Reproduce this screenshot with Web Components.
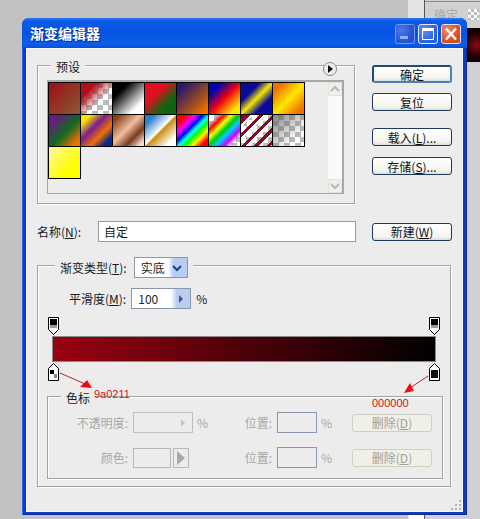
<!DOCTYPE html>
<html>
<head>
<meta charset="utf-8">
<style>
html, body { margin: 0; height: 100%; }
body {
  width: 480px;
  height: 519px;
  overflow: hidden;
  position: relative;
  background: #c2c2c2;
  font: 12px "Noto Sans CJK SC", "Liberation Sans", sans-serif;
  color: #1a1a1a;
}
</style>
</head>
<body>
<desktop-back></desktop-back>
<xp-window title="渐变编辑器">
  <gradient-editor></gradient-editor>
</xp-window>

<script>
const CJK = '"Noto Sans CJK SC", "Liberation Sans", sans-serif';
const CHECK = 'repeating-conic-gradient(#bbb 0 25%, #fff 0 50%) 0 0/11px 11px';

// whatever is showing behind the dialog
class DesktopBack extends HTMLElement {
  constructor() {
    super();
    this.attachShadow({mode: 'open'}).innerHTML = `
<style>
:host { position: absolute; inset: 0; display: block; }
.side { position: absolute; left: 408px; top: 0; width: 16px; height: 519px; background: #e4e4e4; }
.panel { position: absolute; left: 424px; top: 0; width: 56px; height: 519px; background: #d0d0d0; border-left: 1px solid #555; box-sizing: border-box; }
.panel .line { height: 1px; margin-top: 1px; background: #8a8a8a; }
.ok { position: absolute; left: 9px; top: 6px; color: #aaa; font: 12px ${CJK}; }
.chk { position: absolute; left: 43px; top: 9px; width: 11px; height: 11px; background: ${CHECK}; background-size: 6px 6px; }
.dark { position: absolute; left: 42px; top: 28px; width: 14px; height: 34px; background: radial-gradient(circle at 70% 50%, #8a0a14, #200 60%, #050000); }
.foot { position: absolute; left: 409px; top: 515px; width: 15px; height: 4px; background: #fff; }
</style>
<div class="side"></div>
<div class="panel"><div class="line"></div><span class="ok">确定</span><div class="chk"></div><div class="dark"></div></div>
<div class="foot"></div>`;
  }
}
customElements.define('desktop-back', DesktopBack);

class XpWindow extends HTMLElement {
  constructor() {
    super();
    this.attachShadow({mode: 'open'}).innerHTML = `
<style>
:host {
  position: absolute;
  left: 22px;
  top: 18px;
  width: 445px;
  height: 497px;
  display: flex;
  flex-direction: column;
  box-sizing: border-box;
  border-radius: 7px 7px 0 0;
  background: #0a3cc4;
  padding: 0 4px 3px;
  box-shadow: inset 1px 0 #2a6af0, inset -1px 0 #0a2c9c, inset 0 -1px #0a2c9c;
}
.bar {
  height: 30px;
  flex: none;
  margin: 0 -4px;
  padding: 0 6px 0 8px;
  display: flex;
  align-items: center;
  justify-content: space-between;
  border-radius: 7px 7px 0 0;
  background: linear-gradient(#2f7cf2 0, #0c5ae6 10%, #0553e0 50%, #0a5fec 85%, #0a4fd4 100%);
}
.title {
  color: #fff;
  font: bold 14px ${CJK};
  text-shadow: 1px 1px 1px #0a2c80;
}
.btns { display: flex; gap: 3px; margin-top: 1px; }
.btn {
  width: 18px;
  height: 18px;
  border: 1px solid #dfe8ff;
  border-radius: 3px;
  background: radial-gradient(circle at 30% 30%, #5d8df0, #2a5fdc 70%);
}
.btn svg { display: block; }
.btn.min { background: radial-gradient(circle at 30% 30%, #4a7ae6, #2250d0 70%); border-color: #6f97ec; }
.btn.close { background: radial-gradient(circle at 30% 30%, #ec8a66, #d8481c 70%); }
.client { flex: 1; background: #ececec; min-height: 0; position: relative; box-shadow: inset 0 0 0 1px #f8f8f8; }
.grip { position: absolute; right: 1px; bottom: 1px; display: block; }
</style>
<div class="bar">
  <span class="title">${this.getAttribute('title')}</span>
  <div class="btns">
    <div class="btn min"><svg width="18" height="18"><rect x="4" y="11" width="8" height="3" fill="#8fb0f4"/></svg></div>
    <div class="btn"><svg width="18" height="18"><rect x="3.500" y="3.500" width="11" height="11" fill="none" stroke="#fff" stroke-width="1"/><rect x="3" y="3" width="12" height="3" fill="#fff"/></svg></div>
    <div class="btn close"><svg width="18" height="18"><path d="M4 3.500l10 11M14 3.500L4 14.500" stroke="#fff" stroke-width="2.400" fill="none"/></svg></div>
  </div>
</div>
<div class="client">
  <slot></slot>
  <svg class="grip" width="11" height="11" fill="#b4b4b4"><rect x="8" y="0" width="2" height="2"/><rect x="4" y="4" width="2" height="2"/><rect x="8" y="4" width="2" height="2"/><rect x="0" y="8" width="2" height="2"/><rect x="4" y="8" width="2" height="2"/><rect x="8" y="8" width="2" height="2"/></svg>
</div>`;
  }
}
customElements.define('xp-window', XpWindow);

class XpButton extends HTMLElement {
  constructor() {
    super();
    this.attachShadow({mode: 'open'}).innerHTML = `
<style>
:host {
  display: flex;
  align-items: center;
  justify-content: center;
  box-sizing: border-box;
  width: 80px;
  height: 18px;
  border: 1px solid #1c3a5c;
  border-radius: 3px;
  background: linear-gradient(#fff, #f4f4ee 80%, #dcdcd4);
  font: 12px ${CJK};
  color: #111;
}
:host([primary]) { border: 2px solid #3f6ea8; border-color: #24497c #4f7fb8 #4f7fb8 #24497c; }
:host([disabled]) { border-color: #cfcfc6; color: #a0a0a0; background: #f0f0e6; }
</style>
<slot></slot>`;
  }
}
customElements.define('xp-button', XpButton);

// box with a title sitting on its top edge; the title can hold controls too
class GroupBox extends HTMLElement {
  constructor() {
    super();
    this.attachShadow({mode: 'open'}).innerHTML = `
<style>
:host {
  display: block;
  position: relative;
  box-sizing: border-box;
  border: 1px solid #a3a3a3;
  box-shadow: 1px 1px #fff, inset 1px 1px #fff;
}
.legend {
  display: flex;
  width: max-content;
  align-items: center;
  height: var(--legend-h, 16px);
  margin-top: calc(var(--legend-h, 16px) / -2 + var(--legend-shift, 0px));
  margin-left: var(--legend-x, 13px);
  padding: 0 5px;
  background: #ececec;
}
</style>
<div class="legend"><slot name="legend"></slot></div>
<slot></slot>`;
  }
}
customElements.define('group-box', GroupBox);

class SwatchGrid extends HTMLElement {
  constructor() {
    super();
    const chk = CHECK;
    const list = [
      'linear-gradient(135deg,#a00c14,#8a5a38)',
      `linear-gradient(135deg,#b01018 0 25%,transparent 60%),${chk}`,
      'linear-gradient(135deg,#000 25%,#fff 78%)',
      'linear-gradient(135deg,#e01020 35%,#0f6410 70%)',
      'linear-gradient(135deg,#2a1a6c 15%,#9a4a20 60%,#f07000 90%)',
      'linear-gradient(135deg,#0000b0 20%,#f00010 50%,#ffe800 85%)',
      'linear-gradient(135deg,#0a0a98 30%,#f4e800 50%,#0a0a98 72%)',
      'linear-gradient(135deg,#f07000 15%,#ffe800 52%,#f07000 88%)',
      'linear-gradient(135deg,#6a1a80 15%,#0f6a20 55%,#f07000 88%)',
      'linear-gradient(135deg,#ffe000 15%,#7a1f90 40%,#f07000 65%,#0a2a88 85%)',
      'linear-gradient(135deg,#8a4010 10%,#f0c0a0 45%,#7a3a20 70%,#f0e0d0 92%)',
      'linear-gradient(135deg,#2a80c8 15%,#fff 48%,#c89010 52%,#fff 85%)',
      'linear-gradient(135deg,#ff0000 15%,#ff00ff 30%,#0000ff 42%,#00ffff 52%,#00ff00 62%,#ffff00 74%,#ff0000 88%)',
      `linear-gradient(135deg,transparent 14%,#f00 24%,#ff0 36%,#0c0 48%,#0cf 60%,#c0f 74%,transparent 86%),${chk}`,
      `repeating-linear-gradient(135deg,transparent 0 4px,#8a0a20 4px 7px,#fff 7px 9px),linear-gradient(135deg,#8a0a20 20%,transparent 20%),${chk}`,
      `linear-gradient(135deg,rgba(90,90,90,.75),transparent 75%),${chk}`,
      'linear-gradient(135deg,#fff8a0,#ffff00 70%)'
    ];
    const cells = list.map(g => `<i style="background:${g}"></i>`).join('');
    this.attachShadow({mode: 'open'}).innerHTML = `
<style>
:host {
  display: flex;
  box-sizing: border-box;
  height: 114px;
  margin: 6px 10px 0 9px;
  border-top: 2px solid #a8a8a8;
  border-left: 1px solid #a8a8a8;
  border-bottom: 1px solid #a8a8a8;
  border-right: 2px solid #a8a8a8;
}
.grid { flex: 1; display: grid; grid-template-columns: repeat(8, 32px); grid-auto-rows: 32px; align-content: start; }
i { display: block; box-sizing: border-box; border: 1px solid #000; margin: 0 -1px -1px 0; }
.scroll { width: 14px; display: flex; flex-direction: column; justify-content: space-between; background: #fafaf6; }
.arrow { height: 14px; background: #f0f0ea; border: 1px solid #e2e2da; box-sizing: border-box; }
.arrow svg { display: block; }
</style>
<div class="grid">${cells}</div>
<div class="scroll">
  <div class="arrow"><svg width="12" height="12"><path d="M2 8l4-4 4 4" fill="none" stroke="#b8b8b8" stroke-width="2"/></svg></div>
  <div class="arrow"><svg width="12" height="12"><path d="M2 4l4 4 4-4" fill="none" stroke="#b8b8b8" stroke-width="2"/></svg></div>
</div>`;
  }
}
customElements.define('swatch-grid', SwatchGrid);

// little box with a blue drop part on the right: select and the number fields
class ComboBox extends HTMLElement {
  constructor() {
    super();
    const down = this.getAttribute('arrow') === 'down';
    const glyph = down
      ? '<path d="M3 5l4 4 4-4" fill="none" stroke="#1c3c80" stroke-width="2"/>'
      : '<path d="M5 3l4 4-4 4z" fill="#44587c"/>';
    this.attachShadow({mode: 'open'}).innerHTML = `
<style>
:host {
  display: flex;
  box-sizing: border-box;
  height: 21px;
  border: 1px solid #8a96aa;
  background: #fff;
  font: 12px ${CJK};
  color: #222;
}
.val { flex: 1; padding-left: 6px; line-height: 19px; }
.drop { width: 19px; display: flex; align-items: center; justify-content: center; background: linear-gradient(90deg,#fff,#b8ccf4 30%); }
:host([disabled]) { border-color: #c0c0c0; background: #ececec; }
:host([disabled]) .drop { background: none; }
:host([disabled]) path { fill: #c4c4c4; }
</style>
<span class="val"><slot></slot></span>
<span class="drop"><svg width="14" height="14">${glyph}</svg></span>`;
  }
}
customElements.define('combo-box', ComboBox);

class GradientBar extends HTMLElement {
  constructor() {
    super();
    const top = x => `<svg class="stop" style="left:${x}px;top:0" width="12" height="18"><path d="M.5.5h10v12l-5 5l-5-5z" fill="#fff" stroke="#000"/><rect x="2" y="2" width="7" height="6" fill="#000"/><rect x="2" y="8" width="7" height="3" fill="#999"/></svg>`;
    const bottom = (x, inner) => `<svg class="stop" style="left:${x}px;top:46px" width="12" height="18"><path d="M.5 17.500h10v-12l-5-5l-5 5z" fill="#fff" stroke="#000"/>${inner}</svg>`;
    this.attachShadow({mode: 'open'}).innerHTML = `
<style>
:host { display: block; position: relative; height: 64px; margin-left: 5px; width: 384px; }
.bar {
  position: absolute;
  left: 0;
  top: 19px;
  width: 384px;
  height: 26px;
  box-sizing: border-box;
  border: 1px solid #8a8a8a;
  background: linear-gradient(90deg,#9a0211,#000);
}
.stop { position: absolute; display: block; }
</style>
<div class="bar"></div>
${top(-4)}${top(377)}
${bottom(-4, '<rect x="2" y="7" width="7" height="8" fill="#fff"/><rect x="2" y="7" width="4" height="4" fill="#000"/><rect x="6" y="11" width="3" height="4" fill="#888"/>')}
${bottom(377, '<rect x="2" y="7" width="7" height="8" fill="#111"/>')}`;
  }
}
customElements.define('gradient-bar', GradientBar);

// red notes somebody drew on top of the screenshot
class RedNotes extends HTMLElement {
  constructor() {
    super();
    this.attachShadow({mode: 'open'}).innerHTML = `
<style>
:host { position: absolute; left: 0; top: 0; width: 437px; height: 464px; pointer-events: none; display: block; }
svg { position: absolute; left: 0; top: 0; }
span { position: absolute; color: #d8101c; font: 11px "Liberation Sans", sans-serif; line-height: 12px; }
</style>
<svg width="437" height="464">
  <path d="M34 325L59 336M402 328L384 340" stroke="#b8202c" stroke-width="1" fill="none"/>
  <path d="M66 340L54 339 61 332zM378 345L384 335 388 343z" fill="#ee0a14"/>
</svg>
<span style="left:68px;top:340px">9a0211</span>
<span style="left:346px;top:349px">000000</span>`;
  }
}
customElements.define('red-notes', RedNotes);

class GradientEditor extends HTMLElement {
  constructor() {
    super();
    this.attachShadow({mode: 'open'}).innerHTML = `
<style>
:host { display: block; position: relative; height: 100%; box-sizing: border-box; padding: 17px 0 0 11px; font: 12px ${CJK}; color: #1a1a1a; }
u { text-decoration: underline; }
.top { display: grid; grid-template-columns: 318px 80px; column-gap: 17px; }
.side { display: flex; flex-direction: column; }
.side xp-button:nth-child(2) { margin-top: 10px; }
.side xp-button:nth-child(3) { margin-top: 17px; }
.side xp-button:nth-child(4) { margin-top: 11px; }
.presets { height: 139px; }
.menu { position: absolute; right: 17px; top: -4px; width: 14px; height: 14px; border-radius: 50%; background: #ececec; border: 1px solid #8a8a8a; box-sizing: border-box; display: flex; align-items: center; justify-content: center; }
.name { display: grid; grid-template-columns: 61px 258px 96px; align-items: center; margin-top: 17px; }
.name xp-button { justify-self: end; }
.field { box-sizing: border-box; height: 21px; border: 1px solid #9a9a9a; background: #fff; padding-left: 5px; line-height: 19px; }
.grad { margin-top: 23px; width: 414px; height: 222px; --legend-h: 21px; --legend-x: 17px; --legend-shift: 1.5px; }
.row { display: flex; align-items: center; }
.legend-row { gap: 7px; }
.smooth { margin: 10px 0 0 31px; gap: 5px; }
.bar-wrap { margin: 8px 0 0 9px; }
.stops { margin: 15px 0 0 9px; width: 396px; height: 83px; --legend-x: 13px; --legend-h: 16px; --legend-shift: 0px; }
.grid { display: grid; grid-template-columns: 85px 60px 28px 21px 35px 40px 35px 80px; align-items: center; color: #a8a8a8; margin-top: 7px; }
.grid.second { margin-top: 14px; }
.lbl { text-align: right; padding-right: 5px; }
.pct { padding-left: 4px; }
.pos { box-sizing: border-box; height: 21px; border: 1px solid #8a96aa; }
.swatch { display: flex; gap: 2px; }
.swatch .c { width: 38px; height: 20px; box-sizing: border-box; border: 1px solid #b8b8b8; }
.swatch .a { width: 16px; height: 20px; box-sizing: border-box; border: 1px solid #b8b8b8; display: flex; align-items: center; justify-content: center; }
</style>
<div class="top">
  <group-box class="presets">
    <span slot="legend">预设</span>
    <div class="menu"><svg width="8" height="8"><path d="M2 0l5 4-5 4z" fill="#111"/></svg></div>
    <swatch-grid></swatch-grid>
  </group-box>
  <div class="side">
    <xp-button primary>确定</xp-button>
    <xp-button>复位</xp-button>
    <xp-button>载入(<u>L</u>)...</xp-button>
    <xp-button>存储(<u>S</u>)...</xp-button>
  </div>
</div>
<div class="name">
  <span>名称(<u>N</u>):</span>
  <div class="field">自定</div>
  <xp-button>新建(<u>W</u>)</xp-button>
</div>
<group-box class="grad">
  <div slot="legend" class="row legend-row">
    <span>渐变类型(<u>T</u>):</span>
    <combo-box arrow="down" style="width:54px">实底</combo-box>
  </div>
  <div class="row smooth">
    <span>平滑度(<u>M</u>):</span>
    <combo-box style="width:60px">100</combo-box>
    <span>%</span>
  </div>
  <div class="bar-wrap"><gradient-bar></gradient-bar></div>
  <group-box class="stops">
    <span slot="legend">色标</span>
    <div class="grid">
      <span class="lbl">不透明度:</span>
      <combo-box disabled></combo-box>
      <span class="pct">%</span>
      <span></span>
      <span class="lbl">位置:</span>
      <div class="pos"></div>
      <span class="pct">%</span>
      <xp-button disabled>删除(<u>D</u>)</xp-button>
    </div>
    <div class="grid second">
      <span class="lbl">颜色:</span>
      <div class="swatch"><div class="c"></div><div class="a"><svg width="8" height="14"><path d="M0 0l8 7-8 7z" fill="#a8a8a8"/></svg></div></div>
      <span></span>
      <span></span>
      <span class="lbl">位置:</span>
      <div class="pos"></div>
      <span class="pct">%</span>
      <xp-button disabled>删除(<u>D</u>)</xp-button>
    </div>
  </group-box>
</group-box>
<red-notes></red-notes>`;
  }
}
customElements.define('gradient-editor', GradientEditor);
</script>
</body>
</html>
